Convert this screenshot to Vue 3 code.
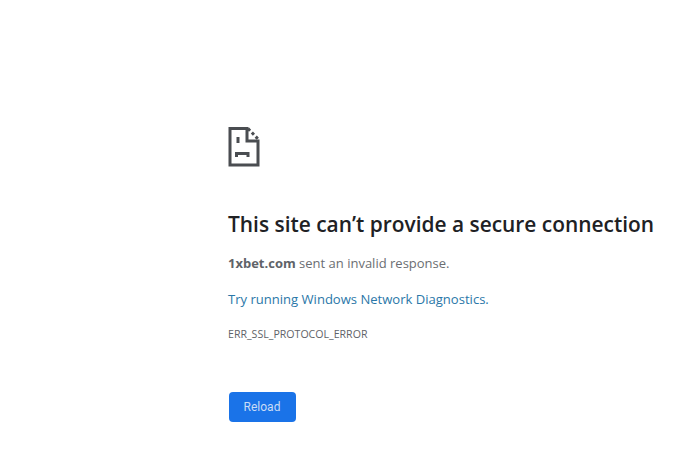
<script setup>
const code = 'ERR_SSL_PROTOCOL_ERROR'
</script>

<template>
  <main class="page">
    <svg class="icon" width="32" height="40" viewBox="0 0 32 40" fill="none" stroke="#4a4d51" stroke-width="3" aria-hidden="true">
      <path d="M2 1.5H19V14H30V38H2Z" />
      <path d="M20 1.5L30 12" stroke-dasharray="3 2.6" />
      <path d="M10 10V16" />
      <path d="M8.5 30V26.5H20V30" />
    </svg>
    <h1 class="title">This site can’t provide a secure connection</h1>
    <p class="summary"><strong>1xbet.com</strong> sent an invalid response.</p>
    <a class="link" href="#">Try running Windows Network Diagnostics.</a>
    <div class="code">{{ code }}</div>
    <button class="reload" type="button">Reload</button>
  </main>
</template>

<style>
html, body { margin: 0; background: #fff; }
</style>

<style scoped>
.page {
  box-sizing: border-box;
  width: 700px;
  height: 474px;
  padding: 127px 0 0 228px;
  overflow: hidden;
  font-family: "Open Sans", "Noto Sans", sans-serif;
  display: flex;
  flex-direction: column;
  align-items: flex-start;
}
.icon { display: block; }
.title {
  margin: 43px 0 0;
  font-size: 20.9px;
  line-height: 28px;
  font-weight: 600;
  color: #202124;
  white-space: nowrap;
}
.summary {
  margin: 15px 0 0;
  font-size: 13px;
  line-height: 20px;
  color: #6b6e72;
}
.summary strong { font-weight: 700; color: #5f6368; }
.link {
  margin-top: 16px;
  font-size: 13.06px;
  line-height: 20px;
  color: #2a77a8;
  text-decoration: none;
}
.code {
  margin-top: 18px;
  font-size: 10.6px;
  line-height: 14px;
  color: #5f6368;
}
.reload {
  margin-top: 51px;
  margin-left: 0.5px;
  width: 67px;
  height: 30px;
  padding: 0;
  border: 0;
  border-radius: 4px;
  background: #1a73e8;
  color: #c9dcf6;
  font-family: Roboto, sans-serif;
  font-size: 12px;
}
</style>
